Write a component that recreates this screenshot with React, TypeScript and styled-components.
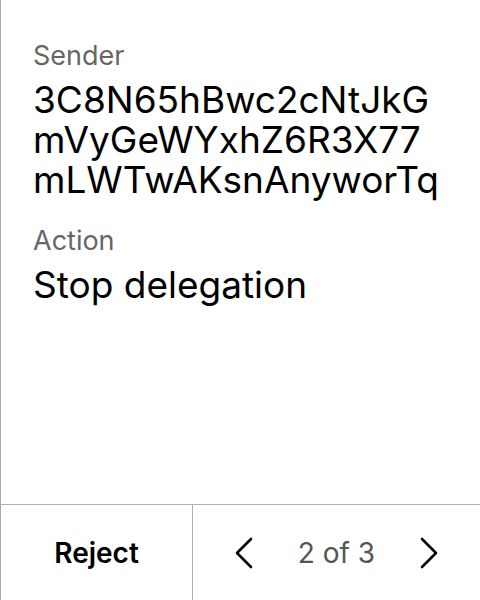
import React from "react";
import styled, { createGlobalStyle } from "styled-components";

const Global = createGlobalStyle`
  html, body { margin: 0; padding: 0; background: #fff; }
  body { font-family: Inter, "Noto Sans", sans-serif; -webkit-font-smoothing: antialiased; }
`;

const Screen = styled.div`
  width: 480px;
  height: 600px;
  box-sizing: border-box;
  border-left: 1px solid #a8a8a8;
  display: flex;
  flex-direction: column;
`;

const Content = styled.div`
  flex: 1;
  padding: 40px 8px 0 32px;
  display: flex;
  flex-direction: column;
  gap: 25px;
`;

const Field = styled.div`
  display: flex;
  flex-direction: column;
  gap: 8px;
`;

const Label = styled.div`
  font-size: 27px;
  line-height: 32px;
  color: #666;
`;

const Value = styled.div`
  font-size: 37px;
  line-height: 40px;
  color: #000;
  word-break: break-all;
`;

const Footer = styled.div`
  height: 96px;
  box-sizing: border-box;
  border-top: 1px solid #b0b0b0;
  display: grid;
  grid-template-columns: 192px 1fr;
`;

const RejectButton = styled.button`
  border: none;
  border-right: 1px solid #b0b0b0;
  background: none;
  font-family: inherit;
  font-size: 28px;
  font-weight: 600;
  color: #000;
  padding: 0;
`;

const Pager = styled.div`
  display: flex;
  align-items: center;
  justify-content: space-between;
  padding: 0 40px 0 40px;
`;

const NavButton = styled.button`
  border: none;
  background: none;
  padding: 0;
  width: 22px;
  height: 34px;
  display: flex;
  align-items: center;
  justify-content: center;
`;

const Count = styled.span`
  font-size: 28px;
  color: #555;
`;

const Chevron = ({ dir }: { dir: "left" | "right" }) => (
  <svg width="18" height="32" viewBox="0 0 18 32" fill="none">
    <path
      d={dir === "left" ? "M16 2 L2 16 L16 30" : "M2 2 L16 16 L2 30"}
      stroke="#000"
      strokeWidth="2.6"
      strokeLinecap="round"
      strokeLinejoin="round"
    />
  </svg>
);

export default function App() {
  return (
    <>
      <Global />
      <Screen>
        <Content>
          <Field>
            <Label>Sender</Label>
            <Value>
              3C8N65hBwc2cNtJkG
              <br />
              mVyGeWYxhZ6R3X77
              <br />
              mLWTwAKsnAnyworTq
            </Value>
          </Field>
          <Field>
            <Label>Action</Label>
            <Value>Stop delegation</Value>
          </Field>
        </Content>
        <Footer>
          <RejectButton>Reject</RejectButton>
          <Pager>
            <NavButton>
              <Chevron dir="left" />
            </NavButton>
            <Count>2 of 3</Count>
            <NavButton>
              <Chevron dir="right" />
            </NavButton>
          </Pager>
        </Footer>
      </Screen>
    </>
  );
}
